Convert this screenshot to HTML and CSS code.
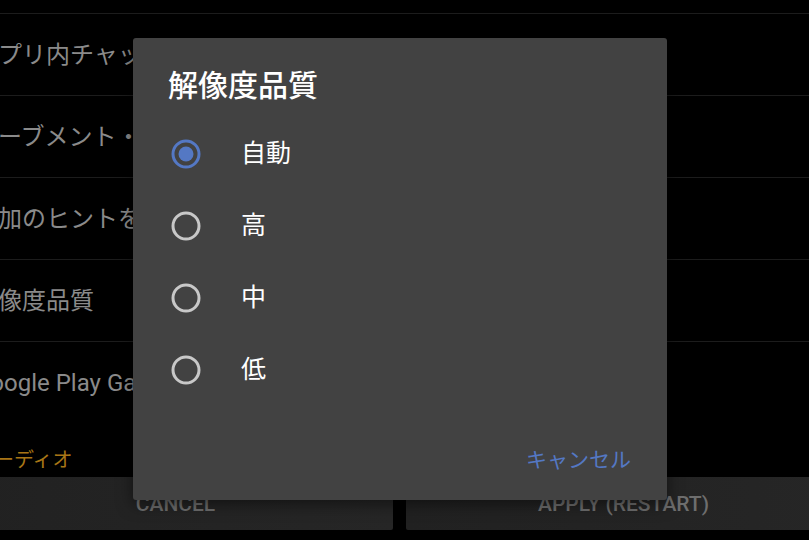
FILE: index.html
```html
<!DOCTYPE html>
<html lang="ja">
<head>
<meta charset="utf-8">
<title>解像度品質</title>
<link rel="stylesheet" href="styles.css">
</head>
<body>
<div class="screen">
  <div class="list">
    <div class="row row-top"></div>
    <div class="row"><span class="row-text">アプリ内チャット</span></div>
    <div class="row"><span class="row-text">ムーブメント・ジェスチャー</span></div>
    <div class="row"><span class="row-text">追加のヒントを表示</span></div>
    <div class="row"><span class="row-text">解像度品質</span></div>
    <div class="row row-last"><span class="row-text">Google Play Games</span></div>
  </div>
  <div class="section">オーディオ</div>
  <div class="buttons">
    <div class="btn">CANCEL</div>
    <div class="btn">APPLY (RESTART)</div>
  </div>
</div>

<div class="dialog">
  <div class="dialog-title">解像度品質</div>
  <div class="options">
    <div class="option">
      <svg class="radio" viewBox="0 0 30 30" width="30" height="30"><circle cx="15" cy="15" r="13" fill="none" stroke="#5478c4" stroke-width="3"/><circle cx="15" cy="15" r="7.5" fill="#5478c4"/></svg>
      <span class="option-label">自動</span>
    </div>
    <div class="option">
      <svg class="radio" viewBox="0 0 30 30" width="30" height="30"><circle cx="15" cy="15" r="13" fill="none" stroke="#c8c8c8" stroke-width="3"/></svg>
      <span class="option-label">高</span>
    </div>
    <div class="option">
      <svg class="radio" viewBox="0 0 30 30" width="30" height="30"><circle cx="15" cy="15" r="13" fill="none" stroke="#c8c8c8" stroke-width="3"/></svg>
      <span class="option-label">中</span>
    </div>
    <div class="option">
      <svg class="radio" viewBox="0 0 30 30" width="30" height="30"><circle cx="15" cy="15" r="13" fill="none" stroke="#c8c8c8" stroke-width="3"/></svg>
      <span class="option-label">低</span>
    </div>
  </div>
  <div class="actions"><span class="action">キャンセル</span></div>
</div>
</body>
</html>
```

FILE: styles.css
```css
html, body {
  margin: 0;
  padding: 0;
  background: #000;
}
body {
  width: 809px;
  height: 540px;
  overflow: hidden;
  position: relative;
  font-family: Roboto, "Noto Sans CJK JP", sans-serif;
}
.screen {
  margin-left: -42px;
  width: 893px;
}
.list {
  display: flex;
  flex-direction: column;
}
.row {
  height: 81px;
  border-bottom: 1px solid #1c1c1c;
  display: flex;
  align-items: center;
  padding-left: 16px;
}
.row-top {
  height: 13px;
}
.row-last {
  border-bottom: none;
  height: 82px;
}
.row-text {
  color: #8a8a8a;
  font-size: 24px;
  line-height: 30px;
  white-space: nowrap;
}
.section {
  height: 53px;
  box-sizing: border-box;
  display: flex;
  align-items: flex-end;
  padding-left: 16px;
  padding-bottom: 5px;
  color: #a87616;
  font-size: 20px;
  line-height: 24px;
}
.buttons {
  display: flex;
  gap: 13px;
}
.btn {
  width: 435px;
  height: 53px;
  flex: none;
  border-radius: 2px;
  background: linear-gradient(90deg, #212121, #262626);
  color: #6e6e6e;
  font-weight: 500;
  font-size: 21px;
  display: flex;
  align-items: center;
  justify-content: center;
}
.dialog {
  position: absolute;
  left: 133px;
  top: 38px;
  width: 534px;
  height: 462px;
  background: #424242;
  border-radius: 3px;
  box-shadow: 0 4px 16px rgba(0, 0, 0, 0.5);
  display: flex;
  flex-direction: column;
  box-sizing: border-box;
}
.dialog-title {
  margin-top: 30px;
  padding-left: 35px;
  color: #fff;
  font-size: 30px;
  line-height: 36px;
  font-weight: 500;
}
.options {
  margin-top: 14px;
  display: flex;
  flex-direction: column;
}
.option {
  height: 72px;
  display: flex;
  align-items: center;
  padding-left: 38px;
  gap: 40px;
}
.radio {
  flex: none;
  display: block;
}
.option-label {
  color: #fff;
  font-size: 25px;
  line-height: 30px;
}
.actions {
  margin-top: auto;
  padding: 0 36px 28px 0;
  display: flex;
  justify-content: flex-end;
}
.action {
  color: #5478c4;
  font-size: 21px;
  line-height: 24px;
}
```
